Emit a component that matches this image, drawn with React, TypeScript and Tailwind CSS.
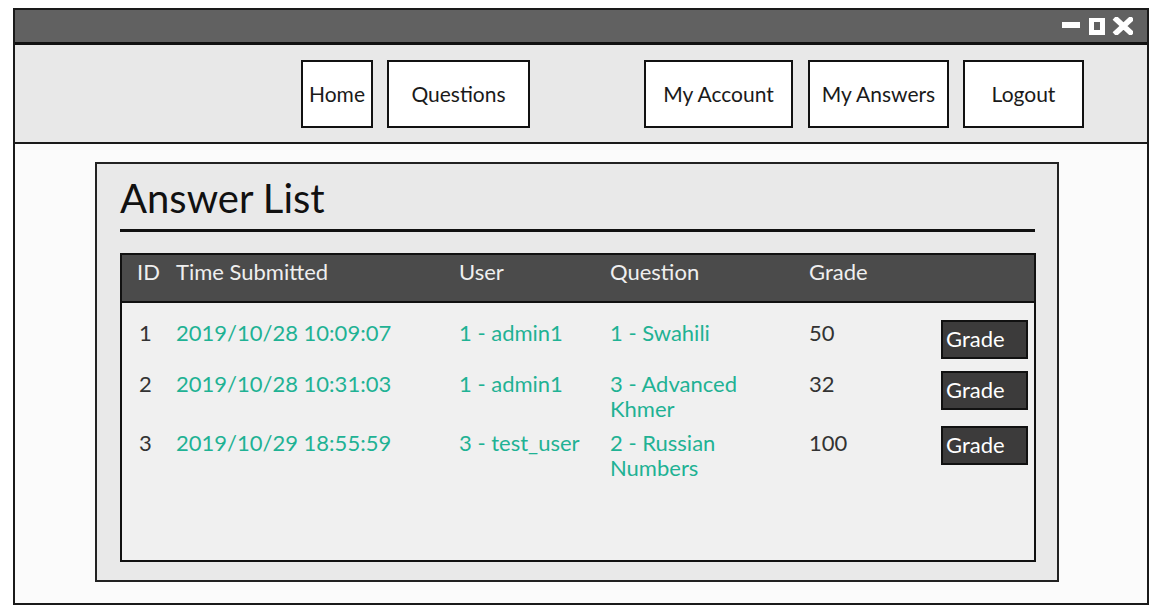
import React from 'react';

type Row = {
  id: string;
  time: string;
  user: string;
  question: string;
  grade: string;
  height: string;
  offset: string;
};

const ROWS: Row[] = [
  { id: '1', time: '2019/10/28 10:09:07', user: '1 - admin1', question: '1 - Swahili', grade: '50', height: 'h-[51px]', offset: 'mt-0' },
  { id: '2', time: '2019/10/28 10:31:03', user: '1 - admin1', question: '3 - Advanced Khmer', grade: '32', height: 'h-[55px]', offset: 'mt-0' },
  { id: '3', time: '2019/10/29 18:55:59', user: '3 - test_user', question: '2 - Russian Numbers', grade: '100', height: 'h-[60px]', offset: 'mt-[4px]' },
];

const NAV = [
  { label: 'Home', w: 'w-[72px]', ml: 'ml-0' },
  { label: 'Questions', w: 'w-[143px]', ml: 'ml-[14px]' },
  { label: 'My Account', w: 'w-[149px]', ml: 'ml-[114px]' },
  { label: 'My Answers', w: 'w-[141px]', ml: 'ml-[15px]' },
  { label: 'Logout', w: 'w-[121px]', ml: 'ml-[14px]' },
];

const WindowControls = () => (
  <svg width="71" height="18" viewBox="0 0 71 18">
    <rect x="0" y="5" width="18" height="6" fill="#fff" />
    <path d="M27 1h16v17H27z M32 5v8h6V5z" fill="#fff" fillRule="evenodd" />
    <path d="M54.5 2.5L68.5 15.5 M68.5 2.5L54.5 15.5" stroke="#fff" strokeWidth="5.5" strokeLinecap="square" />
  </svg>
);

export default function App() {
  return (
    <div
      className="h-[609px] w-[1167px] bg-white pl-[13px] pt-[8px]"
      style={{ fontFamily: 'Lato, "Open Sans", sans-serif' }}
    >
      <div className="flex h-[597px] w-[1136px] flex-col border-2 border-[#1a1a1a] bg-[#fbfbfb]">
        {/* title bar */}
        <div className="flex h-[35px] items-center justify-end border-b-[3px] border-[#111] bg-[#616161] pr-[14px]">
          <WindowControls />
        </div>

        {/* nav */}
        <div className="flex h-[99px] items-start border-b-2 border-[#1a1a1a] bg-[#e8e8e8] pl-[286px] pt-[15px]">
          {NAV.map((n) => (
            <button
              key={n.label}
              className={`${n.w} ${n.ml} flex h-[68px] items-center justify-center border-2 border-[#111] bg-white text-[21px] text-[#1a1a1a]`}
            >
              {n.label}
            </button>
          ))}
        </div>

        {/* content */}
        <div className="flex-1 pl-[80px] pt-[18px]">
          <div className="h-[420px] w-[964px] border-2 border-[#222] bg-[#e9e9e9] pl-[23px] pt-[10px]">
            <h1 className="text-[40px] leading-[48px] font-normal text-[#111]">Answer List</h1>
            <div className="mt-[7px] h-[3px] w-[915px] bg-[#111]" />

            <div className="mt-[21px] h-[309px] w-[916px] border-2 border-[#111] bg-[#f0f0f0]">
              <div className="flex h-[48px] items-start border-b-2 border-[#111] bg-[#4b4b4b] pl-[15px] pt-0 text-[22px] text-[#efefef]">
                <div className="w-[39px]">ID</div>
                <div className="w-[283px]">Time Submitted</div>
                <div className="w-[151px]">User</div>
                <div className="w-[199px]">Question</div>
                <div className="w-[132px]">Grade</div>
              </div>

              <div className="pl-[15px] pt-[17px]">
                {ROWS.map((r) => (
                  <div key={r.id} className={`flex items-start ${r.height} text-[22px] leading-[25px]`}>
                    <div className={`w-[39px] ${r.offset} pl-[2px] text-[#333]`}>{r.id}</div>
                    <div className={`w-[283px] ${r.offset} text-[#1fb294]`}>{r.time}</div>
                    <div className={`w-[151px] ${r.offset} text-[#1fb294]`}>{r.user}</div>
                    <div className={`w-[199px] ${r.offset} text-[#1fb294]`}>
                      <div className="w-[150px]">{r.question}</div>
                    </div>
                    <div className={`w-[132px] ${r.offset} text-[#333]`}>{r.grade}</div>
                    <button className="flex h-[39px] w-[87px] items-center border-2 border-[#111] bg-[#3c3b3b] pb-[3px] pl-[3px] text-[22px] text-white">
                      Grade
                    </button>
                  </div>
                ))}
              </div>
            </div>
          </div>
        </div>
      </div>
    </div>
  );
}
